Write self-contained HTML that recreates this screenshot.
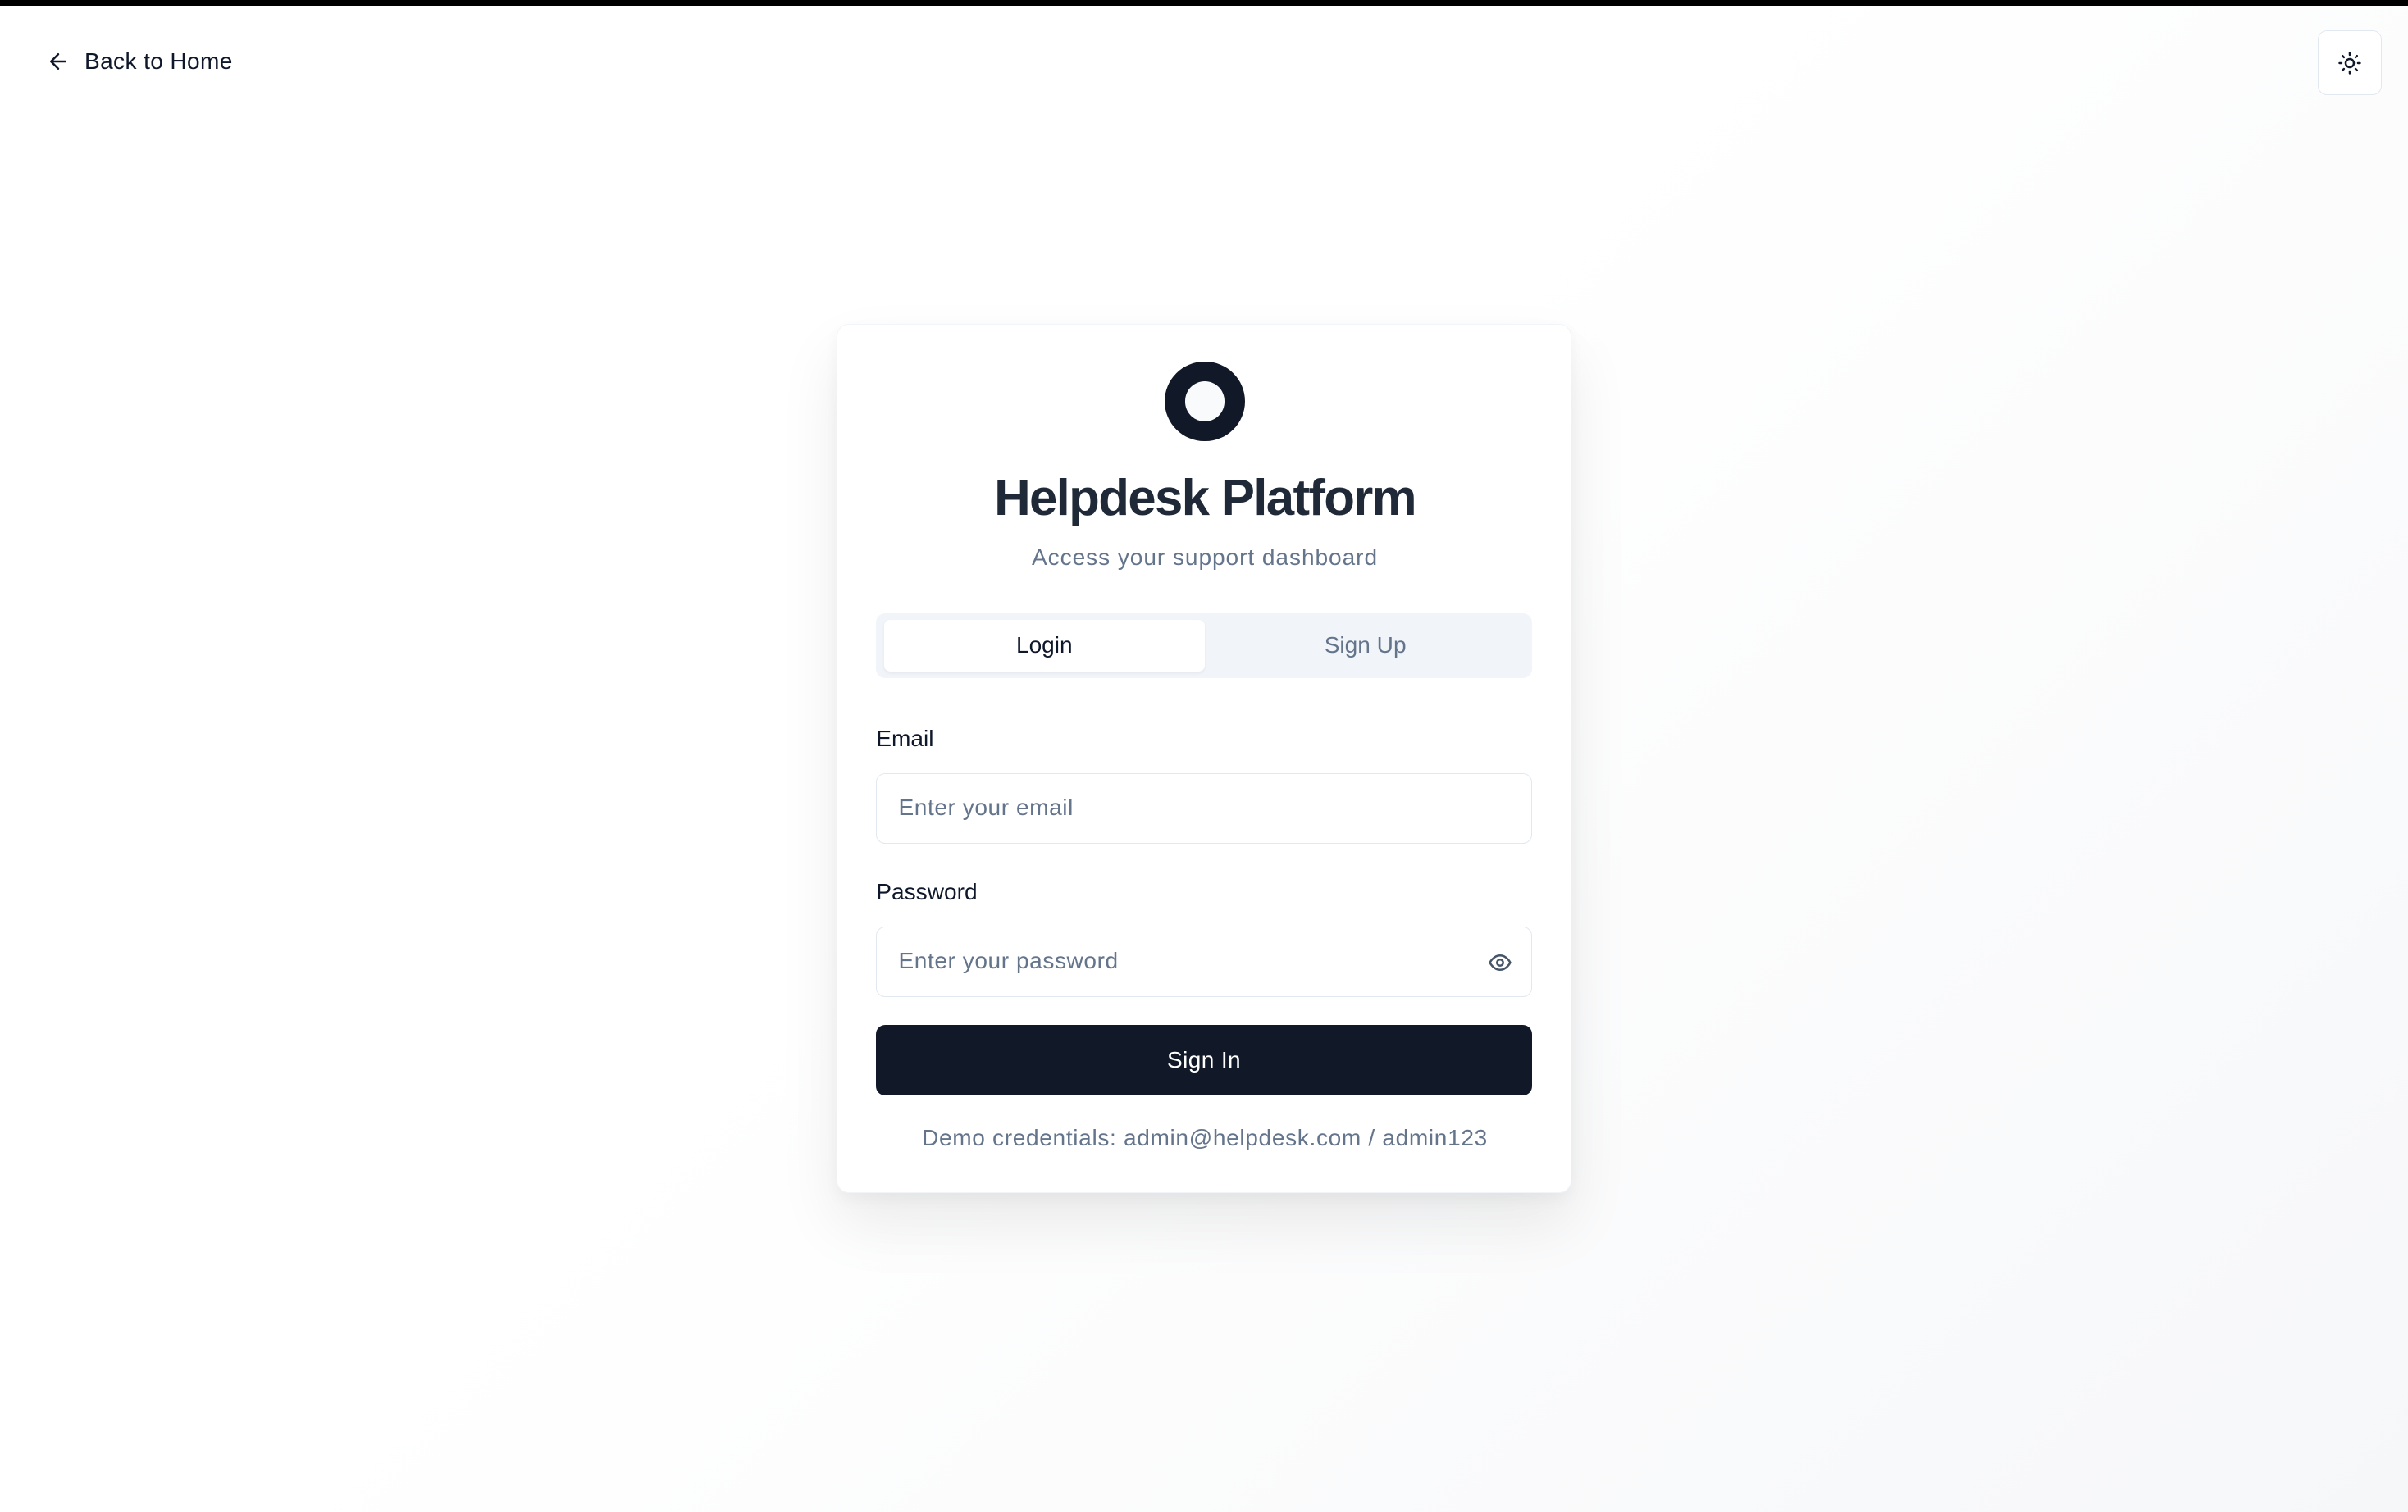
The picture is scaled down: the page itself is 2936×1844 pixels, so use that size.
<!DOCTYPE html>
<html><head><meta charset="utf-8">
<style>
html,body{margin:0;padding:0;}
body{width:1568px;height:985px;zoom:1.87245;overflow:hidden;position:relative;
font-family:"Liberation Sans",sans-serif;
background:linear-gradient(135deg,#ffffff 0%,#ffffff 45%,#f6f7f9 100%);}
.topbar{position:absolute;left:0;top:0;width:100%;height:4px;background:#000;}
.back{position:absolute;left:30px;top:30px;font-size:15px;color:#0f172a;display:flex;align-items:center;gap:9px;height:20px;letter-spacing:0.2px;}
.theme{position:absolute;left:1509px;top:20px;width:42px;height:42px;border:1px solid #e2e8f0;border-radius:6px;background:#fff;box-sizing:border-box;display:flex;align-items:center;justify-content:center;}
.card{position:absolute;left:545px;top:211px;width:478px;height:566px;background:#fff;border-radius:8px;box-shadow:0 20px 40px rgba(0,0,0,.08),0 4px 10px rgba(0,0,0,.04);border:1px solid #f1f5f9;box-sizing:border-box;}
.abs{position:absolute;}
.ring{left:213px;top:24px;width:52px;height:52px;border-radius:50%;background:#111827;display:flex;align-items:center;justify-content:center;}
.ring div{width:26px;height:26px;border-radius:50%;background:#f8fafc;}
.title{left:0;width:478px;top:94px;text-align:center;font-size:33px;font-weight:bold;color:#1f2937;letter-spacing:-0.9px;}
.sub{left:0;width:478px;top:143px;text-align:center;font-size:15px;color:#64748b;letter-spacing:0.5px;}
.tabs{left:25px;top:188px;width:427px;height:42px;background:#f1f5f9;border-radius:6px;}
.tab1{left:5px;top:4px;width:209px;height:34px;background:#fff;border-radius:4px;box-shadow:0 1px 2px rgba(0,0,0,.06);text-align:center;line-height:33px;font-size:15px;color:#0f172a;}
.tab2{left:214px;top:4px;width:209px;height:34px;text-align:center;line-height:33px;font-size:15px;color:#64748b;}
.lbl{left:25px;font-size:15px;color:#0f172a;}
.inp{left:25px;width:427px;height:46px;border:1px solid #e2e8f0;border-radius:6px;box-sizing:border-box;padding-left:14px;line-height:44px;font-size:15px;color:#64748b;letter-spacing:0.3px;}
.btn{left:25px;top:456px;width:427px;height:46px;background:#111827;border-radius:6px;color:#fff;font-size:15px;text-align:center;line-height:46px;letter-spacing:0.2px;}
.demo{left:0;width:478px;top:521px;text-align:center;font-size:15px;color:#64748b;letter-spacing:0.35px;}
</style></head><body>
<div class="topbar"></div>
<div class="back"><svg width="16" height="16" viewBox="0 0 24 24" fill="none" stroke="#0f172a" stroke-width="2" stroke-linecap="round" stroke-linejoin="round"><path d="M19 12H5M12 19l-7-7 7-7"/></svg><span>Back to Home</span></div>
<div class="theme"><svg width="16" height="16" viewBox="0 0 24 24" fill="none" stroke="#0f172a" stroke-width="2" stroke-linecap="round"><circle cx="12" cy="12" r="4"/><path d="M12 2v2M12 20v2M4.93 4.93l1.41 1.41M17.66 17.66l1.41 1.41M2 12h2M20 12h2M6.34 17.66l-1.41 1.41M19.07 4.93l-1.41 1.41"/></svg></div>
<div class="card">
 <div class="abs ring"><div></div></div>
 <div class="abs title">Helpdesk Platform</div>
 <div class="abs sub">Access your support dashboard</div>
 <div class="abs tabs"><div class="abs tab1">Login</div><div class="abs tab2">Sign Up</div></div>
 <div class="abs lbl" style="top:261px">Email</div>
 <div class="abs inp" style="top:292px">Enter your email</div>
 <div class="abs lbl" style="top:361px">Password</div>
 <div class="abs inp" style="top:392px">Enter your password
  <svg style="position:absolute;right:12px;top:15px" width="16" height="16" viewBox="0 0 24 24" fill="none" stroke="#475569" stroke-width="2" stroke-linecap="round" stroke-linejoin="round"><path d="M2 12s3.5-7 10-7 10 7 10 7-3.5 7-10 7S2 12 2 12z"/><circle cx="12" cy="12" r="3"/></svg></div>
 <div class="abs btn">Sign In</div>
 <div class="abs demo">Demo credentials: admin@helpdesk.com / admin123</div>
</div>
</body></html>
